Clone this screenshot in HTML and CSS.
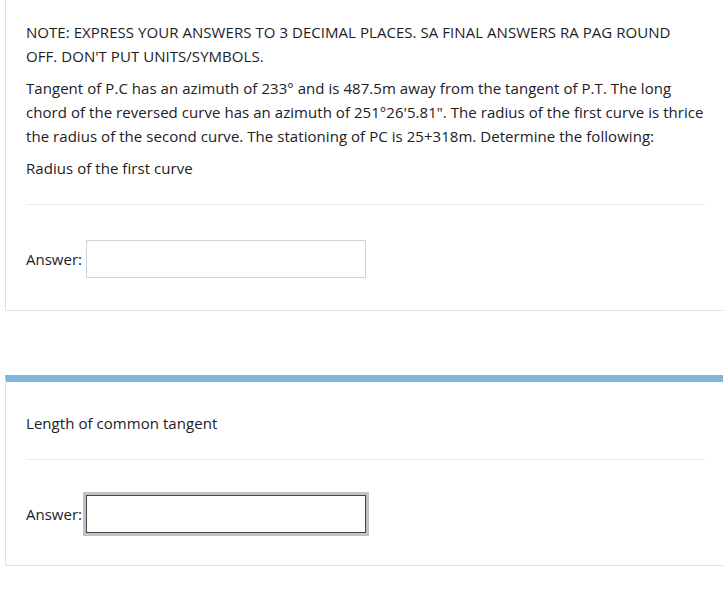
FILE: index.html
```html
<!DOCTYPE html>
<html>
<head>
<meta charset="utf-8">
<link rel="stylesheet" href="styles.css">
</head>
<body>
<div class="page">
  <div class="card card-first">
    <div class="qtext">
      <p>NOTE: EXPRESS YOUR ANSWERS TO 3 DECIMAL PLACES. SA FINAL ANSWERS RA PAG ROUND OFF. DON'T PUT UNITS/SYMBOLS.</p>
      <p>Tangent of P.C has an azimuth of 233° and is 487.5m away from the tangent of P.T. The long chord of the reversed curve has an azimuth of 251°26'5.81". The radius of the first curve is thrice the radius of the second curve. The stationing of PC is 25+318m. Determine the following:</p>
      <p class="last">Radius of the first curve</p>
    </div>
    <div class="ablock">
      <label class="alabel">Answer:</label>
      <input class="ainput" type="text">
    </div>
  </div>
  <div class="card card-blue">
    <div class="qtext">
      <p class="last">Length of common tangent</p>
    </div>
    <div class="ablock">
      <label class="alabel">Answer:</label>
      <input class="ainput focused" type="text">
    </div>
  </div>
</div>
</body>
</html>
```
FILE: styles.css
```css
html { overflow: hidden; background: #fff; }
body {
  margin: 0;
  font-family: "Open Sans", "Noto Sans", sans-serif;
  font-size: 15px;
  color: #1d2125;
}
.page {
  margin-left: 5px;
  width: 722px;
}
.card {
  box-sizing: border-box;
  width: 722px;
  border: 1px solid #dee2e6;
  padding: 0 21px 32px 20px;
  background: #fff;
}
.card-first {
  border-top: 0;
  padding-top: 20px;
}
.card-blue {
  margin-top: 64px;
  border-top: 7px solid #80b5dc;
  padding-top: 29px;
}
.qtext {
  padding-bottom: 24px;
  letter-spacing: 0.05px;
}
.qtext p {
  margin: 0 0 8px;
  line-height: 24px;
}
.qtext p.last { margin-bottom: 0; }
.ablock {
  border-top: 1px solid #e9ecef;
  padding-top: 35px;
  display: flex;
  align-items: center;
}
.alabel {
  line-height: 24px;
  margin-right: 4px;
}
.ainput {
  box-sizing: border-box;
  width: 280px;
  height: 38px;
  border: 1px solid #ced4da;
  padding: 0 8px;
  font: inherit;
  outline: none;
  background: #fff;
}
.ainput.focused {
  border-color: #444;
  box-shadow: 0 0 0 3px #c2c2c2;
}
```
